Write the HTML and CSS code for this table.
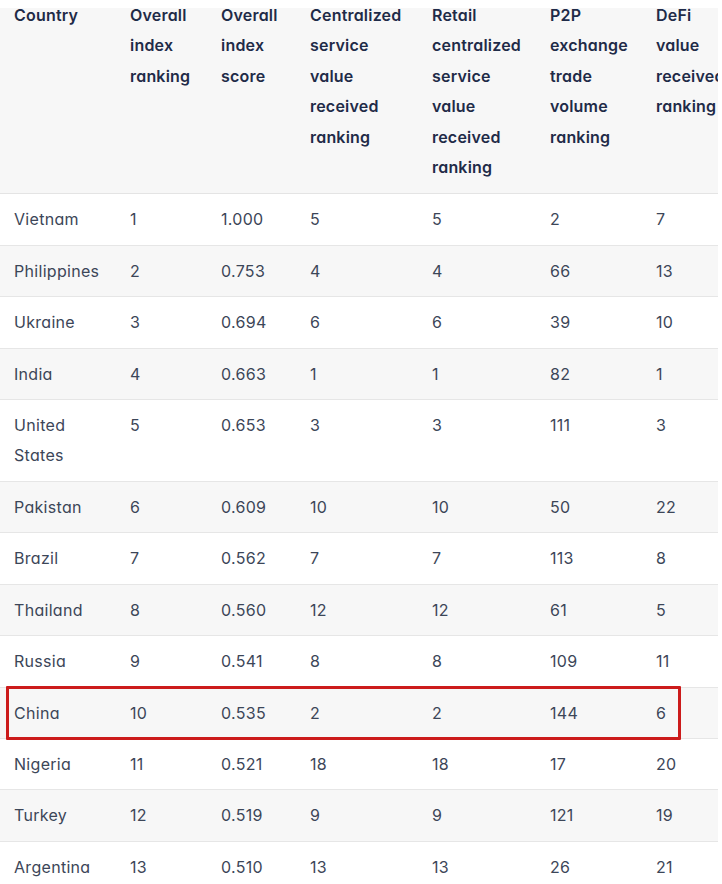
FILE: index.html
```html
<!DOCTYPE html>
<html lang="en">
<head>
<meta charset="utf-8">
<title>Crypto adoption index</title>
<link rel="stylesheet" href="styles.css">
</head>
<body>
<div class="table-wrap">
  <table class="index-table">
    <colgroup>
      <col class="c-country"><col class="c-rank"><col class="c-score"><col class="c-central"><col class="c-retail"><col class="c-p2p"><col class="c-defi">
    </colgroup>
    <thead>
      <tr>
        <th><span class="lbl">Country</span></th>
        <th><span class="lbl">Overall index ranking</span></th>
        <th><span class="lbl">Overall index score</span></th>
        <th><span class="lbl">Centralized service value received ranking</span></th>
        <th><span class="lbl">Retail centralized service value received ranking</span></th>
        <th><span class="lbl">P2P exchange trade volume ranking</span></th>
        <th><span class="lbl">DeFi value received ranking</span></th>
      </tr>
    </thead>
    <tbody>
      <tr><td>Vietnam</td><td>1</td><td>1.000</td><td>5</td><td>5</td><td>2</td><td>7</td></tr>
      <tr><td>Philippines</td><td>2</td><td>0.753</td><td>4</td><td>4</td><td>66</td><td>13</td></tr>
      <tr><td>Ukraine</td><td>3</td><td>0.694</td><td>6</td><td>6</td><td>39</td><td>10</td></tr>
      <tr><td>India</td><td>4</td><td>0.663</td><td>1</td><td>1</td><td>82</td><td>1</td></tr>
      <tr><td>United States</td><td>5</td><td>0.653</td><td>3</td><td>3</td><td>111</td><td>3</td></tr>
      <tr><td>Pakistan</td><td>6</td><td>0.609</td><td>10</td><td>10</td><td>50</td><td>22</td></tr>
      <tr><td>Brazil</td><td>7</td><td>0.562</td><td>7</td><td>7</td><td>113</td><td>8</td></tr>
      <tr><td>Thailand</td><td>8</td><td>0.560</td><td>12</td><td>12</td><td>61</td><td>5</td></tr>
      <tr><td>Russia</td><td>9</td><td>0.541</td><td>8</td><td>8</td><td>109</td><td>11</td></tr>
      <tr class="highlight"><td>China</td><td>10</td><td>0.535</td><td>2</td><td>2</td><td>144</td><td>6</td></tr>
      <tr><td>Nigeria</td><td>11</td><td>0.521</td><td>18</td><td>18</td><td>17</td><td>20</td></tr>
      <tr><td>Turkey</td><td>12</td><td>0.519</td><td>9</td><td>9</td><td>121</td><td>19</td></tr>
      <tr><td>Argentina</td><td>13</td><td>0.510</td><td>13</td><td>13</td><td>26</td><td>21</td></tr>
    </tbody>
  </table>
  <div class="mark"></div>
</div>
</body>
</html>
```
FILE: styles.css
```css
html, body {
  margin: 0;
  padding: 0;
  background: #ffffff;
}
body {
  font-family: Inter, "Noto Sans", "Liberation Sans", sans-serif;
  font-feature-settings: "cv11";
  font-size: 16px;
  color: #3c4658;
}
.table-wrap {
  position: relative;
  width: 718px;
  overflow: hidden;
}
.index-table {
  border-collapse: collapse;
  table-layout: fixed;
  width: 760px;
}
.c-country { width: 116px; }
.c-rank { width: 91px; }
.c-score { width: 89px; }
.c-central { width: 122px; }
.c-retail { width: 118px; }
.c-p2p { width: 106px; }
.c-defi { width: 118px; }

.index-table th {
  text-align: left;
  vertical-align: top;
  font-weight: 600;
  letter-spacing: 0.2px;
  color: #1f2b48;
  line-height: 30.4px;
  padding: 0 14px 11px;
  background: linear-gradient(#ffffff 0 8px, #f7f7f7 8px);
  border-bottom: 1px solid #e4e4e4;
}
.lbl {
  display: block;
  width: min-content;
}
.index-table td {
  text-align: left;
  vertical-align: top;
  letter-spacing: 0.3px;
  line-height: 30.4px;
  padding: 10px 20px 10px 14px;
  border-bottom: 1px solid #e6e6e6;
}
.index-table tbody tr:nth-child(even) td {
  background: #f7f7f7;
}
.mark {
  position: absolute;
  left: 6px;
  top: 686px;
  width: 669px;
  height: 48px;
  border: 3px solid #cc1b1b;
  border-radius: 1px;
}
```
